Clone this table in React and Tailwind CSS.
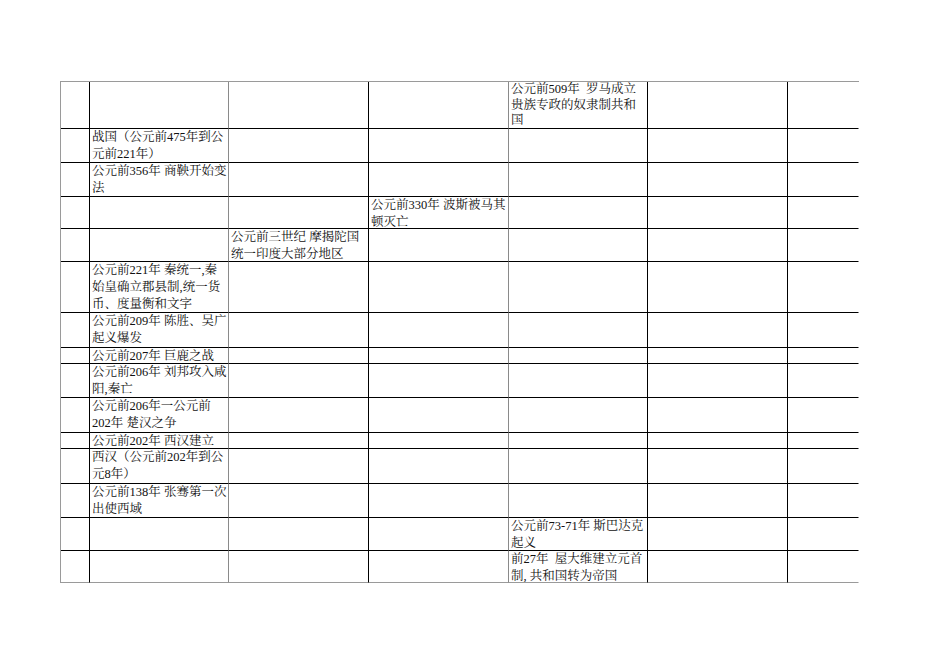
const cols = [
  { w: 'w-[29px]', line: 'border-r-black' },
  { w: 'w-[139px]', line: 'border-r-[#8a8a8a]' },
  { w: 'w-[140px]', line: 'border-r-black' },
  { w: 'w-[140px]', line: 'border-r-[#8a8a8a]' },
  { w: 'w-[139px]', line: 'border-r-black' },
  { w: 'w-[140px]', line: 'border-r-black' },
  { w: 'w-[71px]', line: 'border-r-transparent' },
];

// each row: height, column that holds text, lines of text
const rows = [
  { h: 'h-[47px]', col: 4, lines: ['公元前509年  罗马成立', '贵族专政的奴隶制共和', '国'], tight: true },
  { h: 'h-[34px]', col: 1, lines: ['战国（公元前475年到公', '元前221年）'] },
  { h: 'h-[34px]', col: 1, lines: ['公元前356年 商鞅开始变', '法'] },
  { h: 'h-[32px]', col: 3, lines: ['公元前330年 波斯被马其', '顿灭亡'] },
  { h: 'h-[33px]', col: 2, lines: ['公元前三世纪 摩揭陀国', '统一印度大部分地区'] },
  { h: 'h-[51px]', col: 1, lines: ['公元前221年 秦统一,秦', '始皇确立郡县制,统一货', '币、度量衡和文字'] },
  { h: 'h-[35px]', col: 1, lines: ['公元前209年 陈胜、吴广', '起义爆发'] },
  { h: 'h-[16px]', col: 1, lines: ['公元前207年 巨鹿之战'] },
  { h: 'h-[34px]', col: 1, lines: ['公元前206年 刘邦攻入咸', '阳,秦亡'] },
  { h: 'h-[35px]', col: 1, lines: ['公元前206年一公元前', '202年 楚汉之争'] },
  { h: 'h-[16px]', col: 1, lines: ['公元前202年 西汉建立'] },
  { h: 'h-[35px]', col: 1, lines: ['西汉（公元前202年到公', '元8年）'] },
  { h: 'h-[34px]', col: 1, lines: ['公元前138年 张骞第一次', '出使西域'] },
  { h: 'h-[33px]', col: 4, lines: ['公元前73-71年 斯巴达克', '起义'] },
  { h: 'h-[32px]', col: 4, lines: ['前27年  屋大维建立元首', '制, 共和国转为帝国'] },
];

export default function App() {
  return (
    <div
      className="w-[950px] h-[672px] bg-white overflow-hidden pt-[81px] pl-[60px] text-[#111]"
      style={{ fontFamily: '"Liberation Serif", "Noto Serif CJK SC", "Noto Sans CJK SC", serif' }}
    >
      <div className="inline-flex flex-col border-t border-l border-t-[#9a9a9a] border-l-[#9a9a9a]">
        {rows.map((r, ri) => (
          <div key={ri} className={`flex ${r.h}`}>
            {cols.map((c, ci) => (
              <div
                key={ci}
                className={`${c.w} h-full shrink-0 border-r border-b ${c.line} ${
                  ri === rows.length - 1 ? 'border-b-[#9a9a9a]' : 'border-b-black'
                } overflow-hidden pl-[2px] text-[12.5px] whitespace-pre ${
                  r.tight ? 'leading-[15.5px]' : 'leading-[17px]'
                }`}
              >
                {ci === r.col &&
                  r.lines.map((l, li) => <div key={li}>{l}</div>)}
              </div>
            ))}
          </div>
        ))}
      </div>
    </div>
  );
}
